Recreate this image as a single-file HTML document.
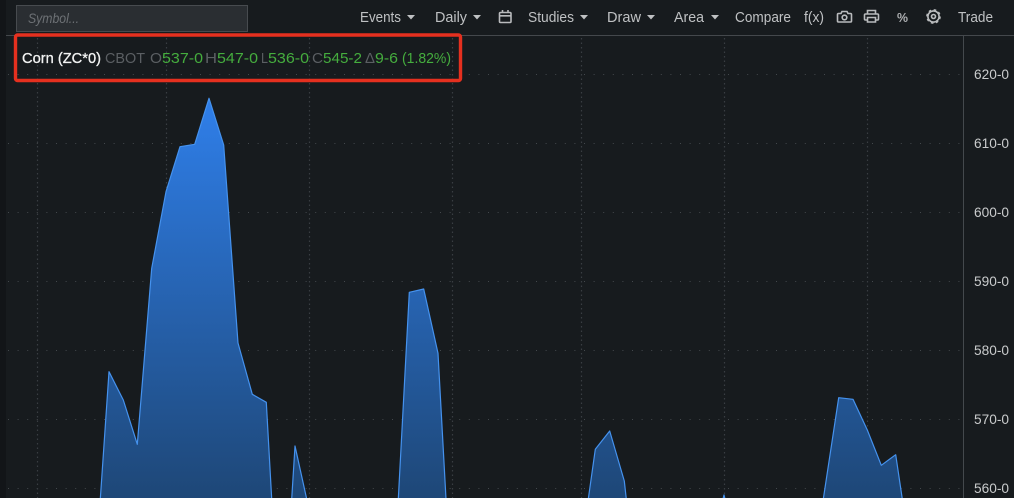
<!DOCTYPE html>
<html>
<head>
<meta charset="utf-8">
<style>
html,body{margin:0;padding:0;background:#171b1e;width:1014px;height:498px;overflow:hidden}
svg{display:block}
text{font-family:"Liberation Sans",sans-serif}
</style>
</head>
<body>
<svg width="1014" height="498" viewBox="0 0 1014 498" xmlns="http://www.w3.org/2000/svg">
<defs>
<linearGradient id="g" gradientUnits="userSpaceOnUse" x1="0" y1="98" x2="0" y2="498">
<stop offset="0" stop-color="#2f7fea"/>
<stop offset="1" stop-color="#1e4777"/>
</linearGradient>
</defs>
<rect width="1014" height="498" fill="#171b1e"/>
<rect width="6" height="498" fill="#121518"/>

<!-- grid -->
<g stroke="#43484c" stroke-width="1" stroke-dasharray="1 8.600" fill="none">
<path d="M8 74.500H962M8 143.500H962M8 212.500H962M8 281.500H962M8 350.500H962M8 419.500H962M8 488.500H962"/>
</g>
<g stroke="#393e42" stroke-width="1.200" stroke-dasharray="1.500 3" fill="none">
<path d="M37.500 38V498M166.500 38V498M309.500 38V498M452.500 38V498M581.500 38V498M724.500 38V498M867.500 38V498"/>
</g>

<!-- header/axis lines -->
<path d="M6 35.500H1014" stroke="#44484c" stroke-width="1"/>
<path d="M963.500 36V498" stroke="#44494d" stroke-width="1"/>

<!-- area -->
<g fill="url(#g)" stroke="#4592ee" stroke-width="1.200" stroke-linejoin="round">
<path d="M100.300 499L109 371.700L123.300 400L137.300 444.300L151.700 268.300L166 191.700L180 146.700L194.700 144.300L209 98.300L223.700 145L238 343L252.300 394.300L266.300 402.300L271.700 499Z"/>
<path d="M291.700 499L295 446L306.700 499Z"/>
<path d="M398.300 499L409.300 292.300L423.700 289L438 353.300L446 499Z"/>
<path d="M588.300 499L595.300 449.300L609.700 431L624.300 481L626.300 499Z"/>
<path d="M723 499L724 495L725 499Z"/>
<path d="M823.300 499L838.700 397.700L853 399.300L867.300 430L881.300 465.300L895.700 454.700L902.300 499Z"/>
</g>

<!-- symbol input -->
<rect x="16.500" y="5.500" width="231" height="26" fill="#2a2e32" stroke="#474b4f"/>
<text x="28" y="23" font-size="14" font-style="italic" fill="#6d7175" textLength="51" lengthAdjust="spacingAndGlyphs">Symbol...</text>

<!-- toolbar -->
<g font-size="14.500" fill="#bfc1c3">
<text x="360" y="22" textLength="41" lengthAdjust="spacingAndGlyphs">Events</text>
<text x="435" y="22" textLength="32" lengthAdjust="spacingAndGlyphs">Daily</text>
<text x="528" y="22" textLength="46" lengthAdjust="spacingAndGlyphs">Studies</text>
<text x="607" y="22" textLength="34" lengthAdjust="spacingAndGlyphs">Draw</text>
<text x="674" y="22" textLength="30" lengthAdjust="spacingAndGlyphs">Area</text>
<text x="735" y="22" textLength="56" lengthAdjust="spacingAndGlyphs">Compare</text>
<text x="804" y="22" textLength="20" lengthAdjust="spacingAndGlyphs">f(x)</text>
<text x="897" y="22" font-size="13" font-weight="bold" fill="#adafb1" textLength="11" lengthAdjust="spacingAndGlyphs">%</text>
<text x="958" y="22" textLength="35" lengthAdjust="spacingAndGlyphs">Trade</text>
</g>
<g fill="#bfc1c3">
<path d="M407 15h8l-4 4.500zM473 15h8l-4 4.500zM580 15h8l-4 4.500zM647 15h8l-4 4.500zM711 15h8l-4 4.500z"/>
</g>

<!-- icons -->
<g fill="none" stroke="#b9bbbd" stroke-width="1.600">
<!-- calendar -->
<path d="M500.500 12.500h9.500a1 1 0 0 1 1 1v8a1 1 0 0 1-1 1h-9.500a1 1 0 0 1-1-1v-8a1 1 0 0 1 1-1zM499.500 15.800h11.500M502.500 10v2.500M508 10v2.500"/>
<!-- camera -->
<path d="M838.500 13.500h2.500l1-2h5l1 2h2.500a1 1 0 0 1 1 1v6.500a1 1 0 0 1-1 1h-12a1 1 0 0 1-1-1v-6.500a1 1 0 0 1 1-1z"/>
<circle cx="844.500" cy="17.500" r="2.300"/>
<!-- printer -->
<path d="M867.500 14v-3.500h8V14M867 20h-1.500a1 1 0 0 1-1-1v-4a1 1 0 0 1 1-1h12a1 1 0 0 1 1 1v4a1 1 0 0 1-1 1H876M867.500 17.500h8v4.500h-8z"/>
<!-- gear -->
<circle cx="933.500" cy="16.500" r="5.600"/>
<circle cx="933.500" cy="16.500" r="6.600" stroke-dasharray="2.600 2.580" stroke-width="1.500"/>
<circle cx="933.500" cy="16.500" r="2"/>
</g>

<!-- legend -->
<g font-size="15">
<text x="22" y="63" fill="#f2f3f3" stroke="#f2f3f3" stroke-width="0.300" textLength="79" lengthAdjust="spacingAndGlyphs">Corn (ZC*0)</text>
<g fill="#5b5f63">
<text x="105" y="63" textLength="40" lengthAdjust="spacingAndGlyphs">CBOT</text>
<text x="150" y="63" textLength="12" lengthAdjust="spacingAndGlyphs">O</text>
<text x="205" y="63" textLength="12" lengthAdjust="spacingAndGlyphs">H</text>
<text x="261" y="63" textLength="7" lengthAdjust="spacingAndGlyphs">L</text>
<text x="312" y="63" textLength="11" lengthAdjust="spacingAndGlyphs">C</text>
<text x="365" y="63" textLength="10" lengthAdjust="spacingAndGlyphs">Δ</text>
</g>
<g fill="#45ad3e">
<text x="162" y="63" textLength="41" lengthAdjust="spacingAndGlyphs">537-0</text>
<text x="217" y="63" textLength="41" lengthAdjust="spacingAndGlyphs">547-0</text>
<text x="268" y="63" textLength="41" lengthAdjust="spacingAndGlyphs">536-0</text>
<text x="323" y="63" textLength="39" lengthAdjust="spacingAndGlyphs">545-2</text>
<text x="375" y="63" textLength="23" lengthAdjust="spacingAndGlyphs">9-6</text>
<text x="402" y="63" textLength="49" lengthAdjust="spacingAndGlyphs">(1.82%)</text>
</g>
</g>

<!-- highlight -->
<rect x="15.500" y="35" width="445" height="45.500" rx="2" fill="none" stroke="#e5301f" stroke-width="3.400"/>

<!-- axis labels -->
<g font-size="14" fill="#c9cbcc">
<text x="974" y="79" textLength="35" lengthAdjust="spacingAndGlyphs">620-0</text>
<text x="974" y="148" textLength="35" lengthAdjust="spacingAndGlyphs">610-0</text>
<text x="974" y="217" textLength="35" lengthAdjust="spacingAndGlyphs">600-0</text>
<text x="974" y="286" textLength="35" lengthAdjust="spacingAndGlyphs">590-0</text>
<text x="974" y="355" textLength="35" lengthAdjust="spacingAndGlyphs">580-0</text>
<text x="974" y="424" textLength="35" lengthAdjust="spacingAndGlyphs">570-0</text>
<text x="974" y="493" textLength="35" lengthAdjust="spacingAndGlyphs">560-0</text>
</g>
</svg>
</body>
</html>
